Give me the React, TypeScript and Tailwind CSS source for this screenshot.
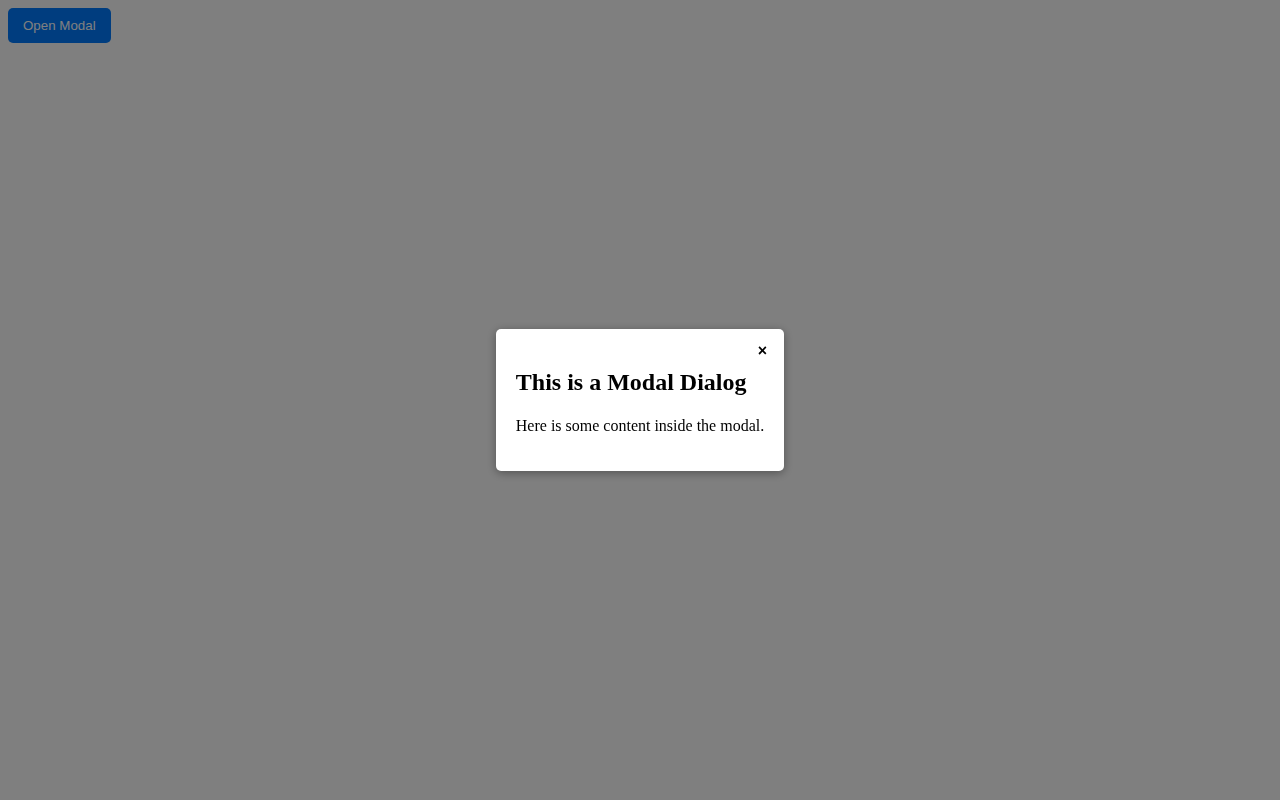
import React from "react";

export default function App() {
  return (
    <div className="min-h-screen bg-white p-2" style={{ fontFamily: '"Liberation Serif", "Times New Roman", serif' }}>
      <button
        className="rounded-[5px] bg-[#007bff] px-[15px] py-[10px] text-[13.333px] leading-[15px] text-white"
        style={{ fontFamily: '"Liberation Sans", Arial, sans-serif' }}
      >
        Open Modal
      </button>
      <div className="fixed inset-0 flex items-center justify-center bg-[rgba(0,0,0,0.5)]">
        <div className="relative rounded-[5px] bg-white p-5 text-black shadow-[0_2px_10px_rgba(0,0,0,0.35)]">
          <button
            className="absolute right-[11px] top-[12px] px-[6px] py-px text-[16px] font-bold leading-[18px] text-black"
            style={{ fontFamily: '"Liberation Sans", Arial, sans-serif' }}
          >
            ×
          </button>
          <h2 className="my-[19.92px] text-[24px] font-bold leading-[27.6px]">This is a Modal Dialog</h2>
          <p className="my-4 text-[16px] leading-[18.4px]">Here is some content inside the modal.</p>
        </div>
      </div>
    </div>
  );
}
